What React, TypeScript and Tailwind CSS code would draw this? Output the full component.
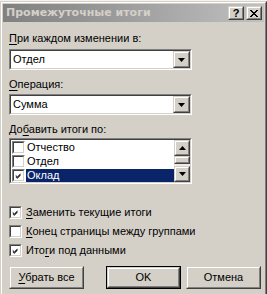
import React from "react";

const font = { fontFamily: "'Liberation Sans', Arial, sans-serif" };

function Arrow({ up }: { up?: boolean }) {
  return (
    <svg width="7" height="4" viewBox="0 0 7 4" className="block">
      {up ? <polygon points="3.5,0 7,4 0,4" fill="#000" /> : <polygon points="0,0 7,0 3.5,4" fill="#000" />}
    </svg>
  );
}

function RaisedBox({ className = "", children }: { className?: string; children?: React.ReactNode }) {
  return (
    <div className={"border border-t-[#d4d0c8] border-l-[#d4d0c8] border-b-[#404040] border-r-[#404040] " + className}>
      <div className="flex h-full w-full items-center justify-center border border-t-white border-l-white border-b-[#808080] border-r-[#808080] bg-[#d4d0c8]">
        {children}
      </div>
    </div>
  );
}

function Sunken({ className = "", children }: { className?: string; children?: React.ReactNode }) {
  return (
    <div className={"border border-t-[#808080] border-l-[#808080] border-b-white border-r-white " + className}>
      <div className="flex h-full w-full border border-t-[#404040] border-l-[#404040] border-b-[#d4d0c8] border-r-[#d4d0c8] bg-white">
        {children}
      </div>
    </div>
  );
}

function Check({ checked }: { checked?: boolean }) {
  return (
    <Sunken className="h-[13px] w-[13px] shrink-0">
      {checked && (
        <svg width="9" height="9" viewBox="0 0 9 9" className="m-[1px] block">
          <path d="M1 4 L3 6 L7 2 M1 5 L3 7 L7 3 M1 3 L3 5 L7 1" stroke="#000" strokeWidth="1" fill="none" />
        </svg>
      )}
    </Sunken>
  );
}

function Combo({ value }: { value: string }) {
  return (
    <Sunken className="ml-[7px] h-[21px] w-[183px]">
      <div className="flex-1 pl-[2px] text-[11px] leading-[17px] text-black">{value}</div>
      <RaisedBox className="h-[17px] w-[17px]">
        <Arrow />
      </RaisedBox>
    </Sunken>
  );
}

function Label({ pre, u, post, className = "" }: { pre?: string; u: string; post: string; className?: string }) {
  return (
    <div className={"ml-[7px] text-[11px] leading-[13px] text-black " + className}>
      {pre}
      <span className="underline underline-offset-[2px]">{u}</span>
      {post}
    </div>
  );
}

function Btn({ children, def }: { children: React.ReactNode; def?: boolean }) {
  const inner = (
    <RaisedBox className="h-full w-full">
      <span className="text-[11px] text-black">{children}</span>
    </RaisedBox>
  );
  return def ? <div className="h-[23px] w-[75px] border border-black">{inner}</div> : <div className="h-[23px] w-[75px]">{inner}</div>;
}

export default function App() {
  const items = [
    { t: "Отчество", c: false },
    { t: "Отдел", c: false },
    { t: "Оклад", c: true, sel: true },
  ];
  return (
    <div className="flex h-[294px] w-[267px] flex-col overflow-hidden bg-[#f4f3f0]" style={font}>
      <div className="h-[1px]" />
      <div className="flex flex-1 flex-col border-l border-t border-r border-l-[#d4d0c8] border-t-[#d4d0c8] border-r-[#404040] bg-[#d4d0c8]">
        <div className="flex flex-1 flex-col border-l border-t border-r border-l-white border-t-white border-r-[#808080]">
          <div className="mx-[1px] mt-[1px] flex h-[18px] items-center bg-gradient-to-r from-[#808080] to-[#c0c0c0] pl-[3px] pr-[2px]">
            <span className="flex-1 text-[11px] font-bold text-[#d4d0c8]" style={{ fontFamily: "'DejaVu Sans', sans-serif" }}>
              Промежуточные итоги
            </span>
            <RaisedBox className="h-[14px] w-[16px]">
              <span className="text-[11px] font-bold leading-none">?</span>
            </RaisedBox>
            <RaisedBox className="ml-[2px] h-[14px] w-[16px]">
              <svg width="8" height="7" viewBox="0 0 8 7" className="block">
                <path d="M0 0 L7 7 M1 0 L8 7 M7 0 L0 7 M8 0 L1 7" stroke="#000" strokeWidth="1" />
              </svg>
            </RaisedBox>
          </div>

          <Label className="mt-[10px]" u="П" post="ри каждом изменении в:" />
          <div className="mt-[4px]">
            <Combo value="Отдел" />
          </div>

          <Label className="mt-[8px]" u="О" post="перация:" />
          <div className="mt-[3px]">
            <Combo value="Сумма" />
          </div>

          <Label className="mt-[8px]" pre="До" u="б" post="авить итоги по:" />
          <Sunken className="ml-[7px] mt-[2px] h-[46px] w-[183px]">
            <div className="flex flex-1 flex-col pt-[1px]">
              {items.map((it) => (
                <div key={it.t} className="flex h-[14px] items-center">
                  <div className="ml-[1px] mr-[1px]">
                    <Check checked={it.c} />
                  </div>
                  <div
                    className={
                      "flex-1 pl-[1px] text-[11px] leading-[13px] " +
                      (it.sel ? "bg-[#0a246a] text-white" : "text-black")
                    }
                  >
                    {it.t}
                  </div>
                </div>
              ))}
            </div>
            <div className="flex w-[16px] flex-col bg-[#ecebe8]">
              <RaisedBox className="h-[16px] w-[16px]">
                <Arrow up />
              </RaisedBox>
              <RaisedBox className="h-[8px] w-[16px]" />
              <div className="flex-1" />
              <RaisedBox className="h-[16px] w-[16px]">
                <Arrow />
              </RaisedBox>
            </div>
          </Sunken>

          <div className="ml-[7px] mt-[22px] flex flex-col gap-[6px]">
            {[
              { u: "З", post: "аменить текущие итоги", c: true },
              { u: "К", post: "онец страницы между группами", c: false },
              { pre: "Ито", u: "г", post: "и под данными", c: true },
            ].map((r) => (
              <div key={r.post} className="flex h-[13px] items-center gap-[4px] text-[11px] text-black">
                <Check checked={r.c} />
                <span>
                  {r.pre}
                  <span className="underline underline-offset-[2px]">{r.u}</span>
                  {r.post}
                </span>
              </div>
            ))}
          </div>

          <div className="ml-[7px] mt-[9px] flex">
            <Btn>
              <span className="underline underline-offset-[2px]">У</span>брать все
            </Btn>
            <div className="ml-[22px] mr-[5px]">
              <Btn def>OK</Btn>
            </div>
            <Btn>Отмена</Btn>
          </div>
        </div>
      </div>
    </div>
  );
}
